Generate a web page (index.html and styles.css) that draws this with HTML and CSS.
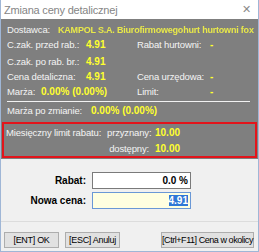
FILE: index.html
```
<!DOCTYPE html>
<html>
  <head>
    <meta charset="utf-8">
    <title>Zmiana ceny detalicznej</title>
    <link rel="stylesheet" href="styles.css">
  </head>
  <body>
    <div class="window">
      <div class="titlebar">
        <span class="title">Zmiana ceny detalicznej</span>
        <span class="close">&#x2715;</span>
      </div>

      <div class="info">
        <div class="row r1">
          <span class="lbl w-dost">Dostawca:</span>
          <span class="val blur">KAMPOL S.A. Biurofirmowegohurt hurtowni fox</span>
        </div>
        <div class="row r2">
          <span class="lbl w-a">C.zak. przed rab.:</span>
          <span class="val w-b">4.91</span>
          <span class="lbl w-c">Rabat hurtowni:</span>
          <span class="val">-</span>
        </div>
        <div class="row r3">
          <span class="lbl w-a">C.zak. po rab. br.:</span>
          <span class="val w-b">4.91</span>
        </div>
        <div class="row r4">
          <span class="lbl w-a">Cena detaliczna:</span>
          <span class="val w-b">4.91</span>
          <span class="lbl w-c">Cena urzędowa:</span>
          <span class="val">-</span>
        </div>
        <div class="row r5">
          <span class="lbl w-marza">Marża:</span>
          <span class="val w-marza-v">0.00% (0.00%)</span>
          <span class="lbl w-c">Limit:</span>
          <span class="val">-</span>
        </div>
        <div class="sep"></div>
        <div class="row">
          <span class="lbl w-po">Marża po zmianie:</span>
          <span class="val">0.00% (0.00%)</span>
        </div>

        <div class="limit">
          <div class="row">
            <span class="lbl w-mies">Miesięczny limit rabatu:</span>
            <span class="lbl w-kind">przyznany:</span>
            <span class="val">10.00</span>
          </div>
          <div class="row">
            <span class="lbl w-mies"></span>
            <span class="lbl w-kind">dostępny:</span>
            <span class="val">10.00</span>
          </div>
        </div>
      </div>

      <div class="form">
        <div class="field">
          <label>Rabat:</label>
          <div class="input">0.0 %</div>
        </div>
        <div class="field">
          <label>Nowa cena:</label>
          <div class="input focus"><span class="sel">4.91</span></div>
        </div>
      </div>

      <div class="footer">
        <button class="btn b-ok">[ENT] OK</button>
        <button class="btn b-esc">[ESC] Anuluj</button>
        <span class="spacer"></span>
        <button class="btn b-okol">[Ctrl+F11] Cena w okolicy</button>
      </div>
    </div>
  </body>
</html>
```

FILE: styles.css
```
html, body {
  margin: 0;
  padding: 0;
}
body {
  font-family: "Liberation Sans", Arial, sans-serif;
  font-size: 10px;
  background: #f0f0f0;
}
.window {
  width: 259px;
  height: 252px;
  box-sizing: border-box;
  border-left: 1px solid #9fb6d6;
  border-right: 1px solid #9fb6d6;
  border-bottom: 1px solid #9fb6d6;
  display: flex;
  flex-direction: column;
  background: #f0f0f0;
}

/* title bar */
.titlebar {
  height: 19px;
  background: #fff;
  display: flex;
  align-items: center;
  padding: 0 0 0 3px;
}
.title {
  flex: 1;
  color: #858585;
  font-size: 11px;
  letter-spacing: -0.2px;
}
.close {
  width: 22px;
  color: #8a8a8a;
  font-size: 11px;
  text-align: center;
  margin-right: 1px;
}

/* gray info panel */
.info {
  background: #7f7f7f;
  padding: 4px 1px 1px 1px;
}
.row {
  display: flex;
  align-items: center;
  height: 14px;
  line-height: 14px;
  padding-left: 5px;
  white-space: nowrap;
  overflow: hidden;
}
.r2 { margin-top: 1px; }
.r3 { margin-top: 3px; }
.r4 { margin-top: 1px; }
.r5 { margin-top: 1px; }
.lbl {
  color: #f4f4f4;
  flex: none;
  font-size: 9.5px;
  letter-spacing: -0.15px;
}
.val {
  color: #ffff2e;
  font-weight: bold;
  flex: none;
}
.blur {
  filter: blur(0.7px);
  color: #e8e84a;
  font-size: 9px;
  letter-spacing: -0.2px;
}
.w-dost { width: 51px; }
.w-a { width: 79px; }
.w-b { width: 51px; }
.w-c { width: 73px; }
.w-marza { width: 34px; }
.w-marza-v { width: 96px; }
.w-po { width: 84px; }
.sep {
  height: 1px;
  background: #f2f2f2;
  margin: 2px 7px 2px 5px;
}
.limit {
  margin-top: 4px;
  border: 2px solid #e3141b;
  padding: 2px 0 0 0;
}
.limit .row { padding-left: 2px; }
.limit .row + .row { margin-top: 2px; }
.w-mies { width: 101px; }
.w-kind { width: 42px; text-align: right; margin-right: 6px; }

/* inputs */
.form {
  padding: 13px 0 0 0;
  display: flex;
  flex-direction: column;
  gap: 3px;
}
.field {
  display: flex;
  align-items: center;
}
.field label {
  width: 85px;
  text-align: right;
  font-weight: bold;
  margin-right: 6px;
}
.input {
  width: 95px;
  height: 15px;
  border: 1px solid #7a7a7a;
  background: #fff;
  text-align: right;
  font-weight: bold;
  line-height: 15px;
  padding-right: 2px;
}
.input.focus {
  background: #ffffe0;
  border-color: #6a98d6;
}
.sel {
  background: #3077d6;
  color: #fff;
}

/* buttons */
.footer {
  margin-top: auto;
  border-top: 1px solid #dcdcdc;
  display: flex;
  align-items: center;
  gap: 6px;
  padding: 10px 4px 3px 3px;
}
.btn {
  font-family: "Liberation Sans", Arial, sans-serif;
  font-size: 9px;
  letter-spacing: -0.3px;
  white-space: nowrap;
  height: 16px;
  background: #e1e1e1;
  border: 1px solid #adadad;
  padding: 0;
  color: #000;
}
.b-okol { letter-spacing: -0.45px; }
.b-ok { width: 55px; }
.b-esc { width: 55px; }
.b-okol { width: 93px; }
.spacer { flex: 1; }
```
